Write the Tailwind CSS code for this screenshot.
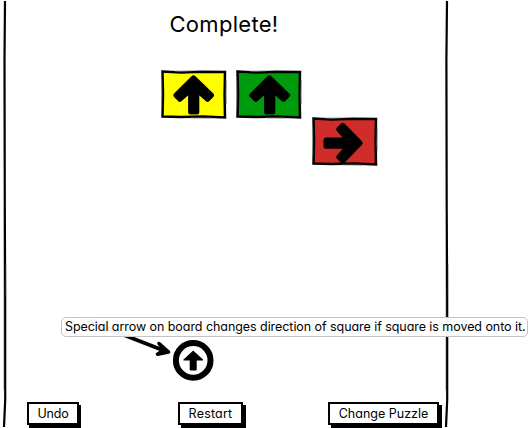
<!DOCTYPE html>
<html lang="en">
<head>
<meta charset="utf-8">
<title>Puzzle</title>
<script src="https://cdn.jsdelivr.net/npm/@tailwindcss/browser@4"></script>
</head>
<body class="w-[528px] h-[428px] overflow-hidden bg-white text-black font-['Inter','Liberation_Sans',sans-serif] [font-feature-settings:'cv11']">
<svg class="hidden">
  <defs>
    <path id="arrow" d="M32.5 7.8L14.8 25.3L18.8 29.3L29.6 19.8V42H35.8V19.8L46.6 29.3L50.6 25.3Z" stroke="#000" stroke-width="5" stroke-linejoin="round"/>
    <g id="edge" fill="none" stroke="#000">
      <path d="M1.5 1.5L20 2.4L40 1.7L64 2L63.6 25L64 47.4L42 46.6L20 47L1.5 46.6L2 24Z" stroke-width="2.5"/>
      <path d="M14 1.2L30 1M30 47.9L50 48.1M.7 10V38M65.2 10V34" stroke="#777" stroke-width=".8"/>
    </g>
  </defs>
</svg>
<main class="relative w-[528px] h-[428px] flex flex-col">
  <svg class="absolute inset-0" width="528" height="428" fill="none" stroke="#000">
    <path d="M5 1L4.5 60L4.8 210L5.2 300V400L4 427" stroke-width="2.2"/>
    <path d="M447 1L446.4 60L446.7 210L447.2 300V400L446 427" stroke-width="2.2"/>
    <path d="M6.2 264V296M448.4 264V296M3.5 210V390M445.5 210V390" stroke="#aaa" stroke-width=".6"/>
    <path d="M88 321L165 351" stroke-width="4" stroke-linecap="round"/>
    <path d="M159 343.5L168.5 352L157.5 354.2L164 350Z" fill="#000" stroke-width="3.6" stroke-linejoin="round"/>
  </svg>
  <h1 class="relative w-[448px] h-[70px] pt-[9px] text-center text-[22px] leading-[30px] tracking-[0.3px]">Complete!</h1>
  <section class="relative ml-[161px] grid grid-cols-[75px_76px_66px] grid-rows-[47px_49px]">
    <svg width="66" height="49"><path d="M2 2H64V47H2Z" fill="#ff0"/><use href="#arrow"/><use href="#edge"/></svg>
    <svg width="66" height="49"><path d="M2 2H64V47H2Z" fill="#009b0d"/><use href="#arrow" x="1"/><use href="#edge"/></svg>
    <svg class="col-start-3 row-start-2" width="66" height="49"><path d="M2 2H64V47H2Z" fill="#d02c2a"/><use href="#arrow" transform="translate(56 -6.5) rotate(90)"/><use href="#edge"/></svg>
  </section>
  <div class="relative mt-auto ml-[61px] w-[467px] h-5 shrink-0 rounded-[5px] border border-[#c3c3c3] bg-white/95 pl-[3px] text-[12.5px] leading-[17px] tracking-[-0.06px] whitespace-nowrap">Special arrow on board changes direction of square if square is moved onto it.</div>
  <svg class="relative mt-[2px] ml-[172px] shrink-0" width="42" height="42">
    <circle cx="21.2" cy="21.4" r="17.3" fill="none" stroke="#000" stroke-width="6"/>
    <path d="M21.2 11.5L31 20.5V21.5H24.7V30.5Q24.7 31.5 23.7 31.5H18.7Q17.7 31.5 17.7 30.5V21.5H11.5V20.5Z"/>
  </svg>
  <footer class="relative mt-[21px] ml-[27px] h-[26px] shrink-0 flex items-start text-[12.5px] leading-[20px] whitespace-nowrap">
    <button class="h-[23px] w-[52px] border-2 border-black bg-white shadow-[2px_3px_0_#000] tracking-[-0.2px]">Undo</button>
    <button class="ml-[99px] h-[23px] w-[65px] border-2 border-black bg-white shadow-[3px_3px_0_#000] tracking-[0.2px]">Restart</button>
    <button class="ml-[85px] h-[23px] w-[111px] border-2 border-black bg-white shadow-[3px_3px_0_#000]">Change Puzzle</button>
  </footer>
</main>
</body>
</html>
